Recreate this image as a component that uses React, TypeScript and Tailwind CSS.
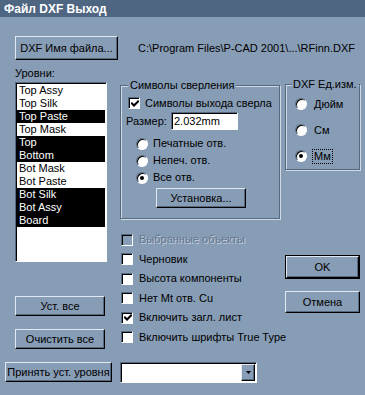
const face = 'bg-[#879cb5]';

function Btn({ className = '', children }: { className?: string; children: React.ReactNode }) {
  return (
    <div
      className={`flex items-center justify-center border border-t-[#e2e9f0] border-l-[#e2e9f0] border-r-black border-b-black shadow-[inset_-1px_-1px_0_#56697f] ${face} ${className}`}
    >
      {children}
    </div>
  );
}

function Check({ checked = false, disabled = false }: { checked?: boolean; disabled?: boolean }) {
  return (
    <div
      className={`flex h-[12px] w-[12px] shrink-0 items-center justify-center border border-t-[#56697f] border-l-[#56697f] border-r-white border-b-white shadow-[inset_1px_1px_0_#000] ${disabled ? face : 'bg-white'}`}
    >
      {checked && (
        <svg width="8" height="8" viewBox="0 0 8 8" className="ml-[1px] mt-[1px]">
          <path d="M1 3.5 L3 5.5 L7 1.5" stroke="#000" strokeWidth="2" fill="none" strokeLinecap="square" />
        </svg>
      )}
    </div>
  );
}

function Radio({ checked = false }: { checked?: boolean }) {
  return (
    <div className="flex h-[12px] w-[12px] shrink-0 items-center justify-center rounded-full border border-t-[#56697f] border-l-[#56697f] border-r-white border-b-white bg-white shadow-[inset_1px_1px_0_#000]">
      {checked && <div className="h-[4px] w-[4px] rounded-full bg-black" />}
    </div>
  );
}

const layers = [
  { name: 'Top Assy', on: false },
  { name: 'Top Silk', on: false },
  { name: 'Top Paste', on: true },
  { name: 'Top Mask', on: false },
  { name: 'Top', on: true },
  { name: 'Bottom', on: true },
  { name: 'Bot Mask', on: false },
  { name: 'Bot Paste', on: false },
  { name: 'Bot Silk', on: true },
  { name: 'Bot Assy', on: true },
  { name: 'Board', on: true },
];

const options = [
  { label: 'Выбранные объекты', checked: false, disabled: true },
  { label: 'Черновик', checked: false },
  { label: 'Высота компоненты', checked: false },
  { label: 'Нет Mt отв. Cu', checked: false },
  { label: 'Включить загл. лист', checked: true },
  { label: 'Включить шрифты True Type', checked: false },
];

const groupBorder =
  'border border-[#56697f] shadow-[inset_1px_1px_0_#cfd9e4,1px_1px_0_#cfd9e4]';

export default function App() {
  return (
    <div className={`h-[395px] w-[365px] overflow-hidden ${face} font-['Liberation_Sans',Arial,sans-serif] text-[11px] leading-[13px] text-black`}>
      <div className="h-[17px] bg-[#4f6683] pl-[4px] text-[12px] font-bold leading-[18px] text-white">
        Файл DXF Выход
      </div>

      <div className="ml-[15px] mt-[19px] flex h-[24px] items-center">
        <Btn className="h-[24px] w-[103px]">DXF Имя файла...</Btn>
        <span className="ml-[20px] whitespace-nowrap">C:\Program Files\P-CAD 2001\...\RFinn.DXF</span>
      </div>

      <div className="flex">
        {/* levels */}
        <div className="ml-[15px] flex w-[92px] flex-col">
          <div className="mt-[7px] h-[13px]">Уровни:</div>
          <div className="mt-[2px] h-[180px] border border-t-[#56697f] border-l-[#56697f] border-r-white border-b-white bg-white pt-[1px] pl-[1px] pr-[1px] shadow-[inset_1px_1px_0_#000]">
            {layers.map((l) => (
              <div
                key={l.name}
                className={`h-[13px] pl-[2px] leading-[13px] ${l.on ? 'bg-black text-white' : 'bg-white text-black'}`}
              >
                {l.name}
              </div>
            ))}
          </div>
          <Btn className="mt-[34px] h-[20px] w-[90px]">Уст. все</Btn>
          <Btn className="mt-[13px] h-[20px] w-[90px]">Очистить все</Btn>
        </div>

        {/* drill symbols */}
        <div className="ml-[13px] flex w-[160px] flex-col">
          <fieldset className={`mt-[19px] h-[140px] pl-[7px] ${groupBorder}`}>
            <legend className={`ml-0 px-[2px] ${face}`}>Символы сверления</legend>
            <div className="mt-[5px] flex h-[12px] items-center gap-[5px]">
              <Check checked />
              <span className="whitespace-nowrap">Символы выхода сверла</span>
            </div>
            <div className="-ml-[2px] mt-[3px] flex h-[18px] items-center">
              <span className="w-[45px]">Размер:</span>
              <div className="flex h-[18px] w-[67px] items-center border border-t-[#56697f] border-l-[#56697f] border-r-white border-b-white bg-white pl-[2px] shadow-[inset_1px_1px_0_#000]">
                2.032mm
              </div>
            </div>
            <div className="mt-[5px] flex flex-col pl-[8px]">
              {['Печатные отв.', 'Непеч. отв.', 'Все отв.'].map((t, i) => (
                <div key={t} className="flex h-[17px] items-center gap-[5px]">
                  <Radio checked={i === 2} />
                  <span>{t}</span>
                </div>
              ))}
            </div>
            <Btn className="ml-[28px] mt-[2px] h-[20px] w-[90px]">Установка...</Btn>
          </fieldset>

          <div className="mt-[11px] flex flex-col pl-[1px]">
            {options.map((o) => (
              <div key={o.label} className="flex h-[19.5px] items-center gap-[6px]">
                <Check checked={o.checked} disabled={o.disabled} />
                <span
                  className={`whitespace-nowrap ${o.disabled ? 'text-[#62768e] [text-shadow:1px_1px_0_#c3cfdc]' : ''}`}
                >
                  {o.label}
                </span>
              </div>
            ))}
          </div>
        </div>

        {/* units */}
        <div className="ml-[5px] flex w-[75px] flex-col">
          <fieldset className={`mt-[18px] h-[92px] pl-[6px] ${groupBorder}`}>
            <legend className={`px-[1px] ${face}`}>DXF Ед.изм.</legend>
            <div className="ml-[3px] flex flex-col">
              {['Дюйм', 'См', 'Мм'].map((t, i) => (
                <div key={t} className="flex h-[26px] items-center gap-[5px]">
                  <Radio checked={i === 2} />
                  <span className={i === 2 ? 'border border-dotted border-black px-[1px]' : 'px-[2px]'}>{t}</span>
                </div>
              ))}
            </div>
          </fieldset>
          <div className="mt-[85px] border border-black">
            <Btn className="h-[22px] w-[73px]">OK</Btn>
          </div>
          <Btn className="mt-[12px] h-[22px] w-[75px]">Отмена</Btn>
        </div>
      </div>

      <div className="ml-[5px] mt-[13px] flex items-start">
        <Btn className="h-[20px] w-[107px] whitespace-nowrap">Принять уст. уровня</Btn>
        <div className="ml-[8px] flex h-[21px] w-[137px] items-center justify-end border border-t-[#56697f] border-l-[#56697f] border-r-white border-b-white bg-white pr-[1px] shadow-[inset_1px_1px_0_#000]">
          <Btn className="h-[17px] w-[14px]">
            <svg width="5" height="3" viewBox="0 0 5 3">
              <path d="M0 0h5L2.5 3z" fill="#000" />
            </svg>
          </Btn>
        </div>
      </div>
    </div>
  );
}
